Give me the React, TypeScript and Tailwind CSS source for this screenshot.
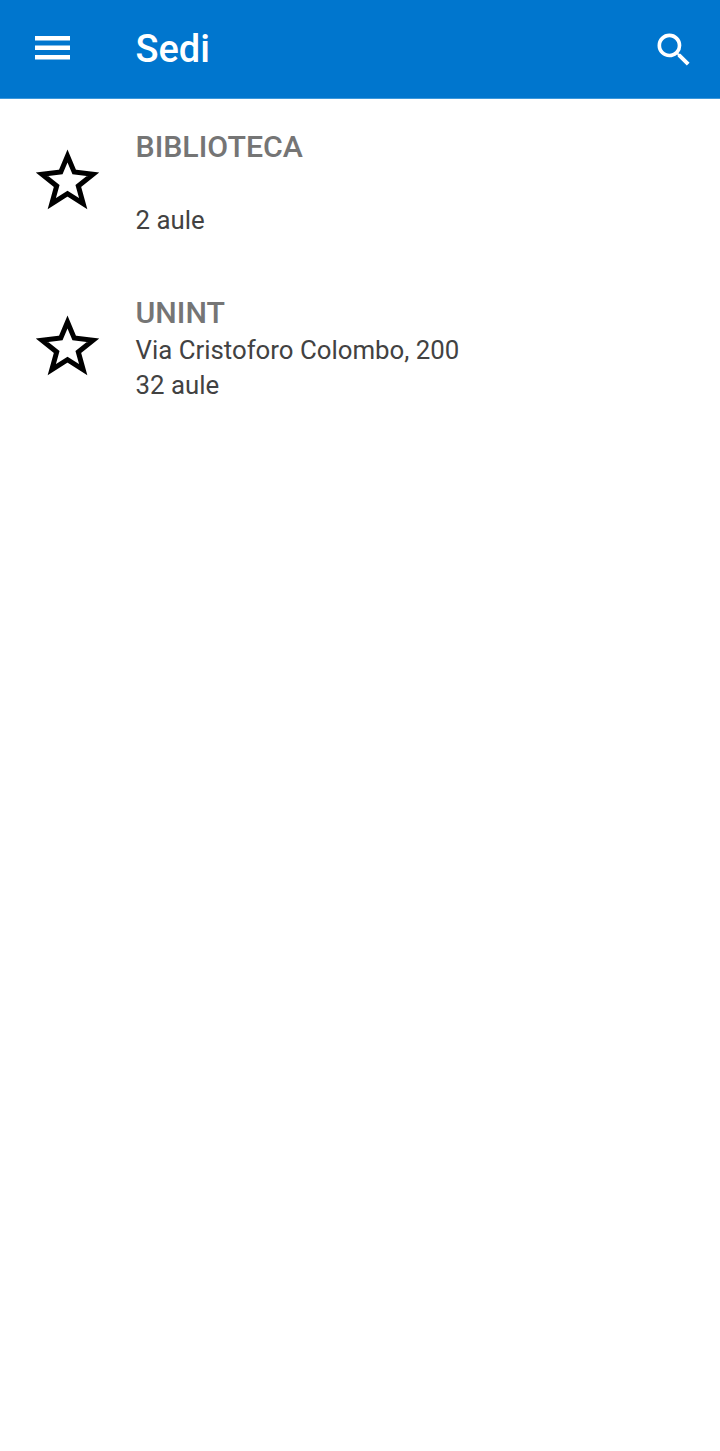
const font = { fontFamily: "Roboto, sans-serif" };

function Star() {
  return (
    <svg width="66" height="64" viewBox="0 0 66 64" className="block">
      <path
        d="M32.500 7 L39.200 23 L58 25.200 L43.300 37 L48.200 54.700 L32.500 44.700 L16.800 54.700 L21.700 37 L7 25.200 L25.800 23 Z"
        fill="none"
        stroke="#000"
        strokeWidth="5"
        strokeLinejoin="miter"
        strokeMiterlimit="10"
      />
    </svg>
  );
}

function Row({ name, address, rooms }: { name: string; address?: string; rooms: string }) {
  return (
    <div className="flex h-[166px] items-start">
      <div className="w-[135.500px] shrink-0 pl-[35px] pt-[50px]">
        <Star />
      </div>
      <div className="flex flex-col pt-[29px]">
        <div className="h-[38px] text-[30.300px] font-medium leading-[38px] text-[#757575]">{name}</div>
        {address ? (
          <div className="h-[36px] text-[25.800px] leading-[36px] text-[#424242]">{address}</div>
        ) : (
          <div className="h-[37px]" />
        )}
        <div className="h-[35px] text-[25.800px] leading-[35px] text-[#424242]">{rooms}</div>
      </div>
    </div>
  );
}

export default function App() {
  return (
    <div className="flex h-[1451px] w-[720px] flex-col bg-white" style={font}>
      <header className="flex h-[99px] shrink-0 items-center border-b border-[#3d98db] bg-[#0076ce]">
        <div className="flex w-[135.500px] shrink-0 justify-center pr-[29.500px]">
          <svg width="36" height="26" viewBox="0 0 36 26" className="block">
            <rect x="0" y="0" width="35" height="4.500" fill="#fff" />
            <rect x="0" y="9.500" width="35" height="4.500" fill="#fff" />
            <rect x="0" y="19" width="35" height="4.500" fill="#fff" />
          </svg>
        </div>
        <div className="flex-1 text-[38px] font-medium leading-none text-white">Sedi</div>
        <svg width="44" height="44" viewBox="0 0 24 24" className="mr-[24px] mb-[-1px] block" fill="#fff">
          <path d="M15.5 14h-.79l-.28-.27A6.471 6.471 0 0 0 16 9.500 6.500 6.500 0 1 0 9.500 16c1.610 0 3.090-.59 4.230-1.570l.27.28v.79l5 4.990L20.490 19l-4.990-5zm-6 0C7.010 14 5 11.990 5 9.500S7.010 5 9.500 5 14 7.010 14 9.500 11.990 14 9.500 14z" />
        </svg>
      </header>
      <main className="flex flex-col">
        <Row name="BIBLIOTECA" rooms="2 aule" />
        <Row name="UNINT" address="Via Cristoforo Colombo, 200" rooms="32 aule" />
      </main>
    </div>
  );
}
